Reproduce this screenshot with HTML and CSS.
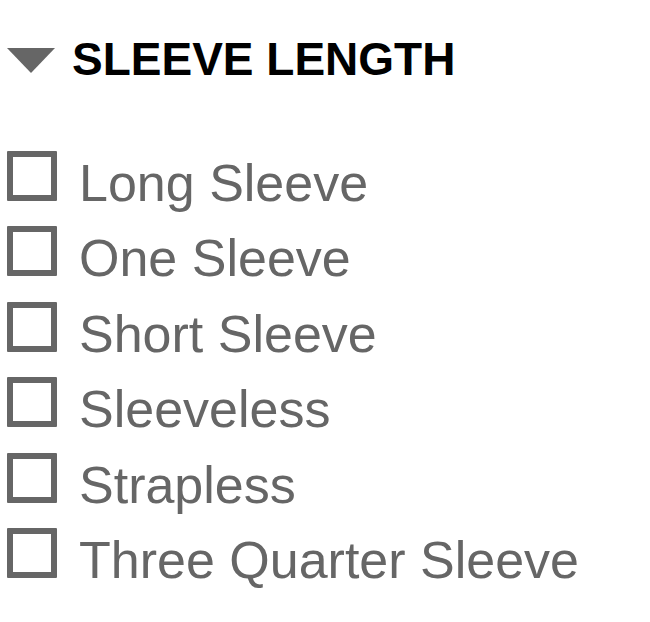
FILE: index.html
```html
<!DOCTYPE html>
<html lang="en">
<head>
  <meta charset="UTF-8" />
  <meta name="viewport" content="width=device-width, initial-scale=1.0"/>
  <title>Sleeve Length</title>
  <link rel="stylesheet" href="styles.css">
</head>
<body>
  <div class="filter">
    <h2 class="filter-title">
      <span class="caret"></span>
      SLEEVE LENGTH
    </h2>
    <ul class="options">
      <li class="option"><span class="box"></span><span class="label">Long Sleeve</span></li>
      <li class="option"><span class="box"></span><span class="label">One Sleeve</span></li>
      <li class="option"><span class="box"></span><span class="label">Short Sleeve</span></li>
      <li class="option"><span class="box"></span><span class="label">Sleeveless</span></li>
      <li class="option"><span class="box"></span><span class="label">Strapless</span></li>
      <li class="option"><span class="box"></span><span class="label">Three Quarter Sleeve</span></li>
    </ul>
  </div>
</body>
</html>
```

FILE: styles.css
```css
body {
  margin: 0;
  font-family: 'Liberation Sans', Arial, sans-serif;
  background-color: #ffffff;
  color: #666;
}
.filter {
  padding: 36px 0 0 7px;
}
.filter-title {
  display: flex;
  align-items: center;
  gap: 17px;
  margin: 0;
  font-size: 46px;
  line-height: 46px;
  font-weight: bold;
  color: #000;
}
.caret {
  width: 0;
  height: 0;
  border-left: 24px solid transparent;
  border-right: 24px solid transparent;
  border-top: 25px solid #666;
  margin-top: 2px;
}
.options {
  list-style: none;
  margin: 64px 0 0;
  padding: 0;
}
.option {
  display: flex;
  align-items: baseline;
  gap: 22px;
  height: 75.4px;
  font-size: 52px;
  line-height: 75.4px;
}
.box {
  box-sizing: border-box;
  width: 50px;
  height: 50px;
  border: 6px solid #666;
  border-radius: 1px;
  background-color: #fff;
}
.label {
  color: #666;
}
```
